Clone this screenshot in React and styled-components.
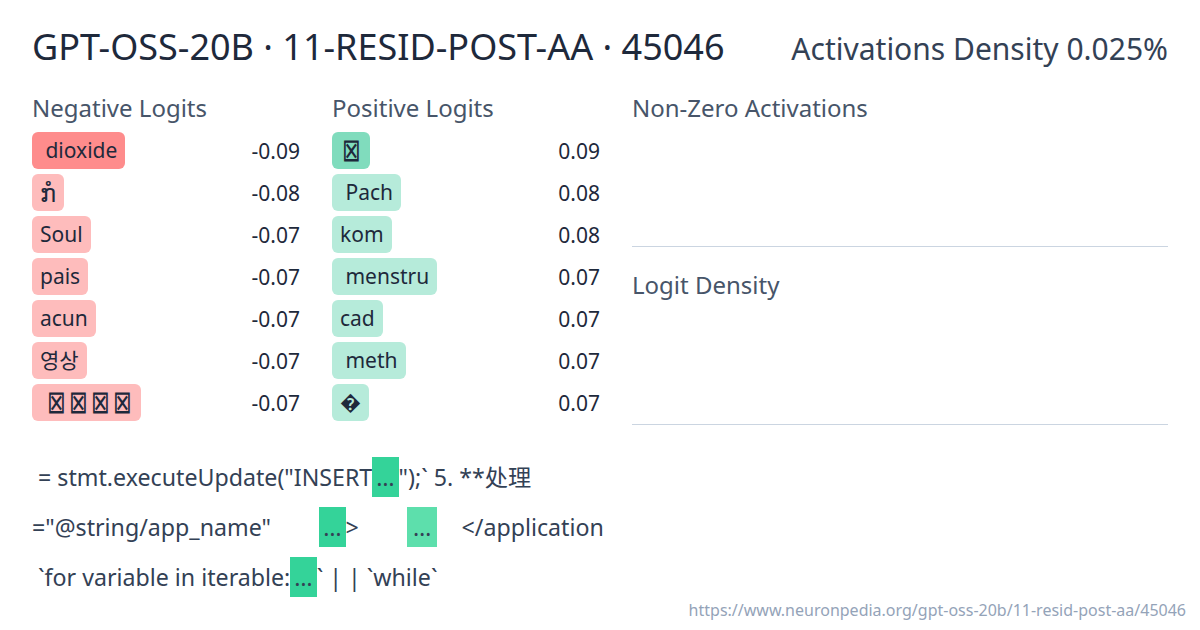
import styled, { createGlobalStyle } from "styled-components";

const GlobalStyle = createGlobalStyle`
  html, body {
    margin: 0;
    padding: 0;
    background: #ffffff;
  }
  body {
    font-family: "Noto Sans", "Noto Sans CJK KR", "DejaVu Sans", sans-serif;
    color: #1e293b;
  }
`;

const Page = styled.div`
  width: 1200px;
  height: 630px;
  box-sizing: border-box;
  padding: 23px 32px 0 32px;
  overflow: hidden;
  display: flex;
  flex-direction: column;
`;

const Header = styled.div`
  display: flex;
  justify-content: space-between;
  align-items: baseline;
`;

const Title = styled.h1`
  margin: 0;
  font-size: 36px;
  font-weight: 400;
  color: #1e293b;
  line-height: 48px;
`;

const Density = styled.div`
  font-size: 30px;
  color: #334155;
`;

const Grid = styled.div`
  display: grid;
  grid-template-columns: 268px 268px 1fr;
  column-gap: 32px;
  margin-top: 21px;
`;

const Heading = styled.h2`
  margin: 0 0 8px 0;
  font-size: 24px;
  font-weight: 400;
  color: #475569;
  line-height: 32px;
`;

const List = styled.div`
  display: flex;
  flex-direction: column;
  gap: 5px;
`;

const Row = styled.div`
  display: flex;
  justify-content: space-between;
  align-items: center;
  height: 37px;
`;

const Chip = styled.span`
  display: inline-block;
  height: 37px;
  line-height: 37px;
  padding: 0 8px;
  border-radius: 6px;
  background: ${(p) => p.$bg};
  font-size: 21px;
  white-space: pre;
  color: #1e293b;
`;

const Tofu = styled.span`
  display: inline-block;
  font-family: "DejaVu Sans", sans-serif;
  font-size: 21px;
  font-weight: 300;
  transform: scale(1.05, 1.5);
  margin: 0 2px;
`;

const Lao = styled.span`
  font-size: 24px;
`;

const Value = styled.span`
  font-size: 21px;
  color: #1e293b;
`;

const Panel = styled.div`
  height: ${(p) => p.$h}px;
  border-bottom: 1px solid #cbd5e1;
  margin-bottom: 22px;
`;

const Examples = styled.div`
  margin-top: 10px;
  display: flex;
  flex-direction: column;
  gap: 10px;
`;

const Line = styled.div`
  height: 40px;
  line-height: 40px;
  font-size: 23.2px;
  color: #334155;
  white-space: pre;
  font-family: "Noto Sans", "Noto Sans CJK SC", sans-serif;
`;

const Mark = styled.span`
  display: inline-block;
  height: 40px;
  padding: 0 ${(p) => p.$pad || 4}px;
  background: ${(p) => p.$bg};
`;

const Url = styled.div`
  margin: 2px -18px 0 0;
  text-align: right;
  font-size: 16px;
  color: #94a3b8;
`;

const tofu = (n) =>
  Array.from({ length: n }, (_, i) => <Tofu key={i}>⊠</Tofu>);

const negatives = [
  [" dioxide", "-0.09", "#fe8c8c"],
  [<Lao>ກໍ</Lao>, "-0.08", "#febcbc"],
  ["Soul", "-0.07", "#febcbc"],
  ["pais", "-0.07", "#febcbc"],
  ["acun", "-0.07", "#febcbc"],
  ["영상", "-0.07", "#febcbc"],
  [<> {tofu(4)}</>, "-0.07", "#febcbc"],
];

const positives = [
  [tofu(1), "0.09", "#80dcbd"],
  [" Pach", "0.08", "#b6ebda"],
  ["kom", "0.08", "#b6ebda"],
  [" menstru", "0.07", "#b6ebda"],
  ["cad", "0.07", "#b6ebda"],
  [" meth", "0.07", "#b6ebda"],
  ["�", "0.07", "#b6ebda"],
];

const LogitColumn = ({ title, items }) => (
  <div>
    <Heading>{title}</Heading>
    <List>
      {items.map(([tok, val, bg], i) => (
        <Row key={i}>
          <Chip $bg={bg}>{tok}</Chip>
          <Value>{val}</Value>
        </Row>
      ))}
    </List>
  </div>
);

const App = () => {
  return (
    <>
      <GlobalStyle />
      <Page>
        <Header>
          <Title>GPT-OSS-20B · 11-RESID-POST-AA · 45046</Title>
          <Density>Activations Density 0.025%</Density>
        </Header>
        <Grid>
          <LogitColumn title="Negative Logits" items={negatives} />
          <LogitColumn title="Positive Logits" items={positives} />
          <div>
            <Panel $h={154}>
              <Heading>Non-Zero Activations</Heading>
            </Panel>
            <Panel $h={155}>
              <Heading>Logit Density</Heading>
            </Panel>
          </div>
        </Grid>
        <Examples>
          <Line>
            {" = stmt.executeUpdate(\"INSERT"}
            <Mark $bg="#34d399">…</Mark>
            {"\");` 5. **处理"}
          </Line>
          <Line>
            {"=\"@string/app_name\"        "}
            <Mark $bg="#34d399">…</Mark>
            {">        "}
            <Mark $bg="#5ddfac" $pad={6}>…</Mark>
            {"    </application"}
          </Line>
          <Line>
            {" `for variable in iterable:"}
            <Mark $bg="#34d399">…</Mark>
            {"` | | `while`"}
          </Line>
        </Examples>
        <Url>https://www.neuronpedia.org/gpt-oss-20b/11-resid-post-aa/45046</Url>
      </Page>
    </>
  );
};

export default App;
